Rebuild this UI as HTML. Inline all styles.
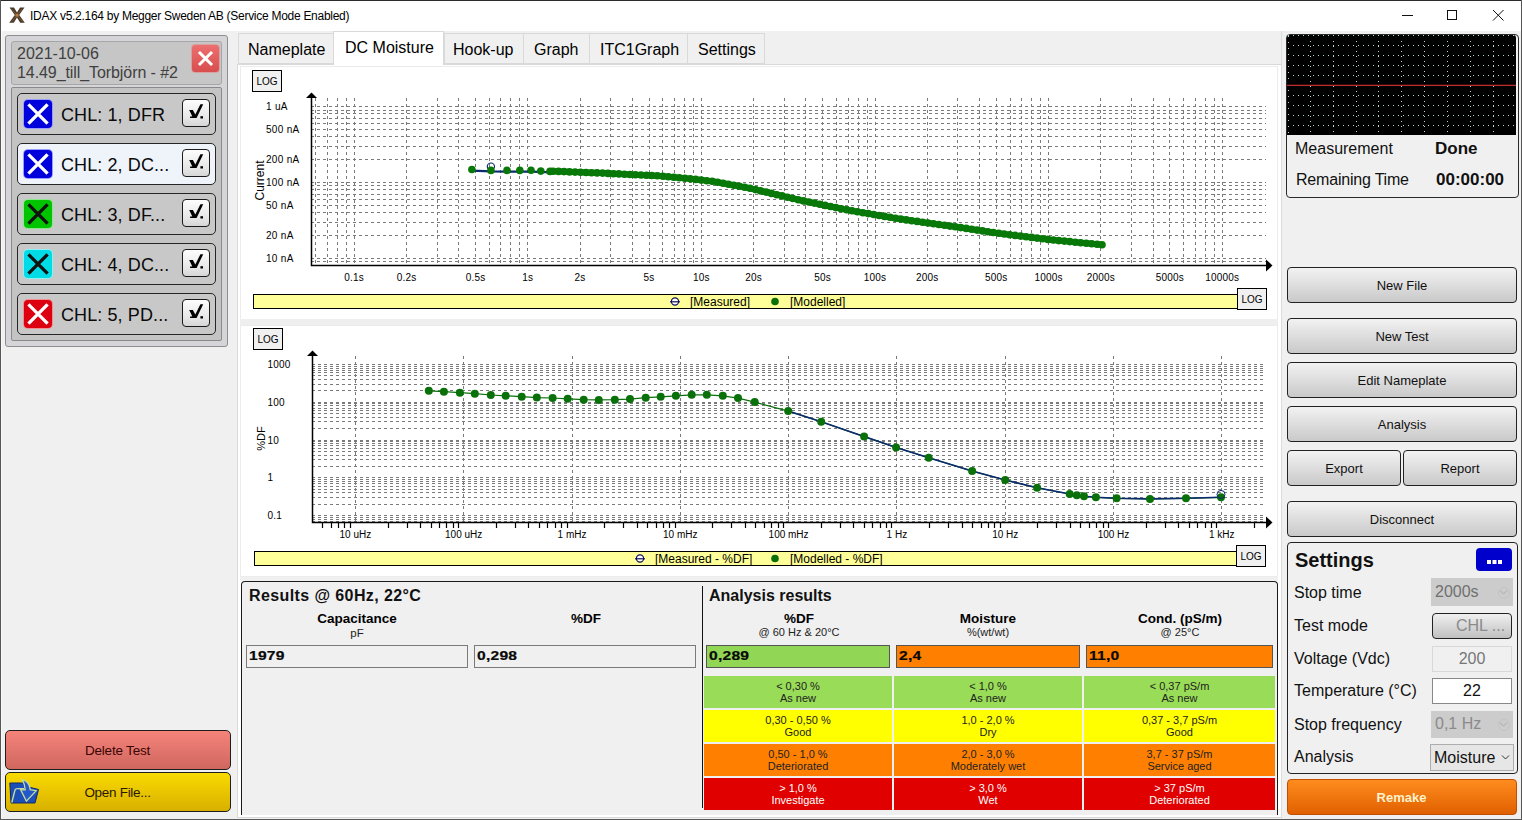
<!DOCTYPE html><html><head><meta charset="utf-8"><style>
*{margin:0;padding:0;box-sizing:border-box}
html,body{width:1522px;height:820px;overflow:hidden;background:#f0f0f0;font-family:"Liberation Sans",sans-serif;color:#000}
.a{position:absolute}
.t{position:absolute;white-space:nowrap;line-height:1}
</style></head><body><div class="a" style="left:0px;top:0px;width:1522px;height:31px;background:#ffffff"></div><div class="a" style="left:0px;top:0px;width:1522px;height:1px;background:#2b2b2b"></div><div class="a" style="left:0px;top:0px;width:1px;height:820px;background:#555555"></div><div class="a" style="left:1px;top:31px;width:1px;height:788px;background:#f9f9f9"></div><div class="a" style="left:1521px;top:0px;width:1px;height:820px;background:#555555"></div><div class="a" style="left:0px;top:819px;width:1522px;height:1px;background:#5a5a5a"></div><svg class="a" style="left:8px;top:6px" width="18" height="18" viewBox="0 0 18 18">
<path d="M1.5 1.5 L6 1.5 L9 6.5 L12 1.5 L16.5 1.5 L11.2 9 L16.8 16.8 L12.2 16.8 L9 11.6 L5.8 16.8 L1.2 16.8 L6.8 9 Z" fill="#4a3a28"/>
<path d="M3.5 3 L9 9.2 L14.5 15.5 M14 3 L9 9.2 L4 15.5" stroke="#8a6a48" stroke-width="0.9" fill="none" opacity="0.8"/><circle cx="9" cy="9.2" r="1.6" fill="#b87840"/>
</svg><div class="t" style="left:30px;top:10px;font-size:12px;color:#000;letter-spacing:-0.28px;">IDAX v5.2.164 by Megger Sweden AB (Service Mode Enabled)</div><div class="a" style="left:1402px;top:15px;width:11px;height:1px;background:#111"></div><div class="a" style="left:1447px;top:10px;width:10px;height:10px;border:1px solid #111"></div><svg class="a" style="left:1492px;top:9px" width="13" height="13" viewBox="0 0 13 13">
<path d="M1 1 L11.5 11.5 M11.5 1 L1 11.5" stroke="#111" stroke-width="1"/></svg><div class="a" style="left:5px;top:35px;width:223px;height:312px;background:#d5d5d9;border:1px solid #8e8e8e;border-radius:3px"></div><div class="a" style="left:11px;top:41px;width:211px;height:44px;background:#c6c6c6;border:1px solid #a6a6a6;border-radius:3px"></div><div class="t" style="left:17px;top:46px;font-size:16px;color:#404040;">2021-10-06</div><div class="t" style="left:17px;top:65px;font-size:16px;color:#404040;letter-spacing:-0.08px;">14.49_till_Torbjörn - #2</div><div class="a" style="left:191px;top:44px;width:29px;height:29px;background:linear-gradient(#ec6f6f,#d84e4e);border-radius:4px;border:1px solid #d9a0a0"></div><svg class="a" style="left:196px;top:49px" width="19" height="19" viewBox="0 0 19 19">
<path d="M4 4 L15 15 M15 4 L4 15" stroke="#fff" stroke-width="3" stroke-linecap="square"/></svg><div class="a" style="left:11px;top:87px;width:211px;height:254px;background:#c4c4c4;border:1px solid #8a8a8a;border-radius:2px"></div><div class="a" style="left:17px;top:93px;width:199px;height:42px;background:#c8c8c8;border:1.5px solid #262626;border-radius:5px"></div><div class="a" style="left:24px;top:100px;width:28px;height:28px;background:#0000dd;border-radius:4px;box-shadow:0 0 0 1px #9a9aff"></div><svg class="a" style="left:24px;top:100px" width="28" height="28" viewBox="0 0 28 28">
<path d="M5.6 5.6 L22.4 22.4 M22.4 5.6 L5.6 22.4" stroke="#fff" stroke-width="3.3" stroke-linecap="square"/></svg><div class="t" style="left:61px;top:105.5px;font-size:18px;color:#0a0a0a;letter-spacing:0.1px;">CHL: 1, DFR</div><div class="a" style="left:182px;top:99px;width:28px;height:28px;background:linear-gradient(#fdfdfd,#e6e6e6 70%,#d6d6d6);border:1.3px solid #1a1a1a;border-radius:4px"></div><svg class="a" style="left:182px;top:99px" width="28" height="28" viewBox="0 0 28 28">
<path d="M7.2 11 H10.9 L13.3 15.6 L18.4 5.2 H21.2 L14.6 18.9 H8.1 V17.5 H10.3 Z" fill="#000"/>
<rect x="18.4" y="17.2" width="2.6" height="2.3" fill="#000"/></svg><div class="a" style="left:17px;top:143px;width:199px;height:42px;background:#eef4fa;border:1.5px solid #262626;border-radius:5px"></div><div class="a" style="left:24px;top:150px;width:28px;height:28px;background:#0000dd;border-radius:4px;box-shadow:0 0 0 1px #9a9aff"></div><svg class="a" style="left:24px;top:150px" width="28" height="28" viewBox="0 0 28 28">
<path d="M5.6 5.6 L22.4 22.4 M22.4 5.6 L5.6 22.4" stroke="#fff" stroke-width="3.3" stroke-linecap="square"/></svg><div class="t" style="left:61px;top:155.5px;font-size:18px;color:#0a0a0a;letter-spacing:0.1px;">CHL: 2, DC...</div><div class="a" style="left:182px;top:149px;width:28px;height:28px;background:linear-gradient(#fdfdfd,#e6e6e6 70%,#d6d6d6);border:1.3px solid #1a1a1a;border-radius:4px"></div><svg class="a" style="left:182px;top:149px" width="28" height="28" viewBox="0 0 28 28">
<path d="M7.2 11 H10.9 L13.3 15.6 L18.4 5.2 H21.2 L14.6 18.9 H8.1 V17.5 H10.3 Z" fill="#000"/>
<rect x="18.4" y="17.2" width="2.6" height="2.3" fill="#000"/></svg><div class="a" style="left:17px;top:193px;width:199px;height:42px;background:#c8c8c8;border:1.5px solid #262626;border-radius:5px"></div><div class="a" style="left:24px;top:200px;width:28px;height:28px;background:#00c400;border-radius:4px;box-shadow:0 0 0 1px #8ce88c"></div><svg class="a" style="left:24px;top:200px" width="28" height="28" viewBox="0 0 28 28">
<path d="M5.6 5.6 L22.4 22.4 M22.4 5.6 L5.6 22.4" stroke="#111" stroke-width="3.3" stroke-linecap="square"/></svg><div class="t" style="left:61px;top:205.5px;font-size:18px;color:#0a0a0a;letter-spacing:0.1px;">CHL: 3, DF...</div><div class="a" style="left:182px;top:199px;width:28px;height:28px;background:linear-gradient(#fdfdfd,#e6e6e6 70%,#d6d6d6);border:1.3px solid #1a1a1a;border-radius:4px"></div><svg class="a" style="left:182px;top:199px" width="28" height="28" viewBox="0 0 28 28">
<path d="M7.2 11 H10.9 L13.3 15.6 L18.4 5.2 H21.2 L14.6 18.9 H8.1 V17.5 H10.3 Z" fill="#000"/>
<rect x="18.4" y="17.2" width="2.6" height="2.3" fill="#000"/></svg><div class="a" style="left:17px;top:243px;width:199px;height:42px;background:#c8c8c8;border:1.5px solid #262626;border-radius:5px"></div><div class="a" style="left:24px;top:250px;width:28px;height:28px;background:#00dce6;border-radius:4px;box-shadow:0 0 0 1px #8cf0f4"></div><svg class="a" style="left:24px;top:250px" width="28" height="28" viewBox="0 0 28 28">
<path d="M5.6 5.6 L22.4 22.4 M22.4 5.6 L5.6 22.4" stroke="#111" stroke-width="3.3" stroke-linecap="square"/></svg><div class="t" style="left:61px;top:255.5px;font-size:18px;color:#0a0a0a;letter-spacing:0.1px;">CHL: 4, DC...</div><div class="a" style="left:182px;top:249px;width:28px;height:28px;background:linear-gradient(#fdfdfd,#e6e6e6 70%,#d6d6d6);border:1.3px solid #1a1a1a;border-radius:4px"></div><svg class="a" style="left:182px;top:249px" width="28" height="28" viewBox="0 0 28 28">
<path d="M7.2 11 H10.9 L13.3 15.6 L18.4 5.2 H21.2 L14.6 18.9 H8.1 V17.5 H10.3 Z" fill="#000"/>
<rect x="18.4" y="17.2" width="2.6" height="2.3" fill="#000"/></svg><div class="a" style="left:17px;top:293px;width:199px;height:42px;background:#c8c8c8;border:1.5px solid #262626;border-radius:5px"></div><div class="a" style="left:24px;top:300px;width:28px;height:28px;background:#dd0010;border-radius:4px;box-shadow:0 0 0 1px #f09090"></div><svg class="a" style="left:24px;top:300px" width="28" height="28" viewBox="0 0 28 28">
<path d="M5.6 5.6 L22.4 22.4 M22.4 5.6 L5.6 22.4" stroke="#fff" stroke-width="3.3" stroke-linecap="square"/></svg><div class="t" style="left:61px;top:305.5px;font-size:18px;color:#0a0a0a;letter-spacing:0.1px;">CHL: 5, PD...</div><div class="a" style="left:182px;top:299px;width:28px;height:28px;background:linear-gradient(#fdfdfd,#e6e6e6 70%,#d6d6d6);border:1.3px solid #1a1a1a;border-radius:4px"></div><svg class="a" style="left:182px;top:299px" width="28" height="28" viewBox="0 0 28 28">
<path d="M7.2 11 H10.9 L13.3 15.6 L18.4 5.2 H21.2 L14.6 18.9 H8.1 V17.5 H10.3 Z" fill="#000"/>
<rect x="18.4" y="17.2" width="2.6" height="2.3" fill="#000"/></svg><div class="a" style="left:5px;top:730px;width:226px;height:40px;background:linear-gradient(#f5837a,#cf675f);border:1px solid #1e1e1e;border-radius:5px"></div><div class="t" style="left:-32.5px;top:743.5px;font-size:13.5px;color:#3a0505;letter-spacing:-0.2px;width:300px;text-align:center;">Delete Test</div><div class="a" style="left:5px;top:772px;width:226px;height:40px;background:linear-gradient(#f9da00,#d8b000);border:1px solid #1e1e1e;border-radius:5px"></div><div class="t" style="left:-32.5px;top:785.5px;font-size:13.5px;color:#2a1800;letter-spacing:-0.3px;width:300px;text-align:center;">Open File...</div><svg class="a" style="left:5px;top:772px" width="40" height="40" viewBox="0 0 40 40">
<path d="M4.8 11 L19 11 L19.5 14 L33.5 17.5 L30 31 L6 31 Z" fill="#1d4fb8" stroke="#0e2a6a" stroke-width="1"/>
<path d="M6.8 30.5 L10 18 Q10.6 16.6 12.2 16.6 L19 16.6" stroke="#c4dca0" stroke-width="1.4" fill="none"/>
<path d="M17.2 7.6 Q24.5 9.5 25.2 17.6 L31.2 18.6 L21.4 29.2 L15.6 17.6 L20.2 17.8 Q19.8 12 17.2 7.6 Z" fill="#2358c8" stroke="#c4dca0" stroke-width="1.3"/>
</svg><div class="a" style="left:237px;top:64px;width:1045px;height:754px;background:#ffffff;border:1px solid #d9d9d9"></div><div class="a" style="left:238px;top:33px;width:96px;height:31px;background:#f0f0f0;border:1px solid #d9d9d9"></div><div class="t" style="left:248px;top:42px;font-size:16px;color:#000;">Nameplate</div><div class="a" style="left:333px;top:31px;width:111px;height:34px;background:#ffffff;border:1px solid #d9d9d9;border-bottom:none"></div><div class="t" style="left:345px;top:40px;font-size:16px;color:#000;">DC Moisture</div><div class="a" style="left:444px;top:33px;width:80px;height:31px;background:#f0f0f0;border:1px solid #d9d9d9"></div><div class="t" style="left:453px;top:42px;font-size:16px;color:#000;">Hook-up</div><div class="a" style="left:523px;top:33px;width:67px;height:31px;background:#f0f0f0;border:1px solid #d9d9d9"></div><div class="t" style="left:534px;top:42px;font-size:16px;color:#000;">Graph</div><div class="a" style="left:589px;top:33px;width:99px;height:31px;background:#f0f0f0;border:1px solid #d9d9d9"></div><div class="t" style="left:600px;top:42px;font-size:16px;color:#000;">ITC1Graph</div><div class="a" style="left:687px;top:33px;width:78px;height:31px;background:#f0f0f0;border:1px solid #d9d9d9"></div><div class="t" style="left:698px;top:42px;font-size:16px;color:#000;">Settings</div><div class="a" style="left:240px;top:66px;width:1038px;height:254px;background:#ffffff;border:1px solid #ececec"></div><div class="a" style="left:240px;top:319px;width:1038px;height:7px;background:#efefef"></div><div class="a" style="left:240px;top:325px;width:1038px;height:252px;background:#ffffff;border:1px solid #ececec"></div><div class="a" style="left:240px;top:577px;width:1038px;height:4px;background:#f0f0f0"></div><svg class="a" style="left:0;top:0" width="1522" height="820" font-family="Liberation Sans, sans-serif"><path d="M311 261.5H1266M311 258.5H1266M311 235.5H1266M311 222.5H1266M311 212.5H1266M311 205.5H1266M311 199.5H1266M311 194.5H1266M311 189.5H1266M311 185.5H1266M311 182.5H1266M311 159.5H1266M311 146.5H1266M311 136.5H1266M311 129.5H1266M311 123.5H1266M311 118.5H1266M311 113.5H1266M311 110.5H1266M311 106.5H1266" stroke="#7a7a7a" stroke-width="1" stroke-dasharray="3 3" fill="none"/><path d="M315.5 98V265M327.5 98V265M337.5 98V265M346.5 98V265M354.5 98V265M406.5 98V265M437.5 98V265M458.5 98V265M475.5 98V265M489.5 98V265M500.5 98V265M510.5 98V265M519.5 98V265M527.5 98V265M580.5 98V265M610.5 98V265M632.5 98V265M649.5 98V265M662.5 98V265M674.5 98V265M684.5 98V265M693.5 98V265M701.5 98V265M753.5 98V265M784.5 98V265M805.5 98V265M822.5 98V265M836.5 98V265M848.5 98V265M858.5 98V265M867.5 98V265M875.5 98V265M927.5 98V265M957.5 98V265M979.5 98V265M996.5 98V265M1010.5 98V265M1021.5 98V265M1031.5 98V265M1040.5 98V265M1048.5 98V265M1100.5 98V265M1131.5 98V265M1153.5 98V265M1169.5 98V265M1183.5 98V265M1195.5 98V265M1205.5 98V265M1214.5 98V265M1222.5 98V265" stroke="#7a7a7a" stroke-width="1" stroke-dasharray="3 3" fill="none"/><path d="M311.5 97V265.5H1267" stroke="#000" stroke-width="1.5" fill="none"/><path d="M306 98L311.5 92.5L317 98Z" fill="#000"/><path d="M1266 259.5L1272.5 265.5L1266 271.5Z" fill="#000"/><text x="266" y="110.0" font-size="10" letter-spacing="0.3">1 uA</text><text x="266" y="133.0" font-size="10" letter-spacing="0.3">500 nA</text><text x="266" y="163.0" font-size="10" letter-spacing="0.3">200 nA</text><text x="266" y="186.0" font-size="10" letter-spacing="0.3">100 nA</text><text x="266" y="209.0" font-size="10" letter-spacing="0.3">50 nA</text><text x="266" y="239.0" font-size="10" letter-spacing="0.3">20 nA</text><text x="266" y="262.0" font-size="10" letter-spacing="0.3">10 nA</text><text x="354.2" y="281" text-anchor="middle" font-size="10" letter-spacing="0.2">0.1s</text><text x="406.5" y="281" text-anchor="middle" font-size="10" letter-spacing="0.2">0.2s</text><text x="475.5" y="281" text-anchor="middle" font-size="10" letter-spacing="0.2">0.5s</text><text x="527.8" y="281" text-anchor="middle" font-size="10" letter-spacing="0.2">1s</text><text x="580.1" y="281" text-anchor="middle" font-size="10" letter-spacing="0.2">2s</text><text x="649.1" y="281" text-anchor="middle" font-size="10" letter-spacing="0.2">5s</text><text x="701.4" y="281" text-anchor="middle" font-size="10" letter-spacing="0.2">10s</text><text x="753.7" y="281" text-anchor="middle" font-size="10" letter-spacing="0.2">20s</text><text x="822.7" y="281" text-anchor="middle" font-size="10" letter-spacing="0.2">50s</text><text x="875.0" y="281" text-anchor="middle" font-size="10" letter-spacing="0.2">100s</text><text x="927.3" y="281" text-anchor="middle" font-size="10" letter-spacing="0.2">200s</text><text x="996.3" y="281" text-anchor="middle" font-size="10" letter-spacing="0.2">500s</text><text x="1048.6" y="281" text-anchor="middle" font-size="10" letter-spacing="0.2">1000s</text><text x="1100.9" y="281" text-anchor="middle" font-size="10" letter-spacing="0.2">2000s</text><text x="1169.9" y="281" text-anchor="middle" font-size="10" letter-spacing="0.2">5000s</text><text x="1222.2" y="281" text-anchor="middle" font-size="10" letter-spacing="0.2">10000s</text><text transform="translate(263.6,180.5) rotate(-90)" text-anchor="middle" font-size="12">Current</text><polyline points="472,170.7 490.7,171.39999999999998 507,171.6 531,171.7 560,172.7 600,174.2 640,176.2 660,177.1 690,180.0 714,182.7 750,189.5 800,201.39999999999998 850,211.7 900,220.2 960,228.7 1000,234.7 1050,240.89999999999998 1102,246.0" stroke="#0b2a70" stroke-width="2.2" fill="none"/><polyline points="553,171.2 560,171.5 600,173 640,175 660,175.9 690,178.8 714,181.5 750,188.3 800,200.2 850,210.5 900,219 960,227.5 1000,233.5 1050,239.7 1102,244.8" stroke="#087808" stroke-width="6" fill="none" stroke-linejoin="round"/><circle cx="490.9" cy="166.6" r="3.6" fill="none" stroke="#0b2a70" stroke-width="1.2"/><circle cx="471.9" cy="169.5" r="3.8" fill="#087808"/><circle cx="490.9" cy="170.4" r="3.8" fill="#087808"/><circle cx="507.0" cy="170.4" r="3.8" fill="#087808"/><circle cx="519.8" cy="170.4" r="3.8" fill="#087808"/><circle cx="531.0" cy="170.3" r="3.8" fill="#087808"/><circle cx="540.8" cy="171.1" r="3.8" fill="#087808"/><circle cx="550.0" cy="171.4" r="3.8" fill="#087808"/><circle cx="553.0" cy="171.3" r="3.8" fill="#087808"/><circle cx="558.5" cy="171.4" r="3.8" fill="#087808"/><circle cx="564.0" cy="171.6" r="3.8" fill="#087808"/><circle cx="569.5" cy="171.9" r="3.8" fill="#087808"/><circle cx="575.0" cy="172.1" r="3.8" fill="#087808"/><circle cx="580.5" cy="172.3" r="3.8" fill="#087808"/><circle cx="586.0" cy="172.5" r="3.8" fill="#087808"/><circle cx="591.5" cy="172.7" r="3.8" fill="#087808"/><circle cx="597.0" cy="172.9" r="3.8" fill="#087808"/><circle cx="602.5" cy="173.1" r="3.8" fill="#087808"/><circle cx="608.0" cy="173.4" r="3.8" fill="#087808"/><circle cx="613.5" cy="173.7" r="3.8" fill="#087808"/><circle cx="618.9" cy="173.9" r="3.8" fill="#087808"/><circle cx="624.4" cy="174.2" r="3.8" fill="#087808"/><circle cx="629.9" cy="174.5" r="3.8" fill="#087808"/><circle cx="635.4" cy="174.8" r="3.8" fill="#087808"/><circle cx="640.9" cy="175.0" r="3.8" fill="#087808"/><circle cx="646.4" cy="175.3" r="3.8" fill="#087808"/><circle cx="651.9" cy="175.5" r="3.8" fill="#087808"/><circle cx="657.4" cy="175.8" r="3.8" fill="#087808"/><circle cx="662.9" cy="176.2" r="3.8" fill="#087808"/><circle cx="668.4" cy="176.7" r="3.8" fill="#087808"/><circle cx="673.8" cy="177.2" r="3.8" fill="#087808"/><circle cx="679.3" cy="177.8" r="3.8" fill="#087808"/><circle cx="684.8" cy="178.3" r="3.8" fill="#087808"/><circle cx="690.3" cy="178.8" r="3.8" fill="#087808"/><circle cx="695.7" cy="179.4" r="3.8" fill="#087808"/><circle cx="701.2" cy="180.1" r="3.8" fill="#087808"/><circle cx="706.7" cy="180.7" r="3.8" fill="#087808"/><circle cx="712.1" cy="181.3" r="3.8" fill="#087808"/><circle cx="717.6" cy="182.2" r="3.8" fill="#087808"/><circle cx="723.0" cy="183.2" r="3.8" fill="#087808"/><circle cx="728.4" cy="184.2" r="3.8" fill="#087808"/><circle cx="733.8" cy="185.2" r="3.8" fill="#087808"/><circle cx="739.2" cy="186.3" r="3.8" fill="#087808"/><circle cx="744.6" cy="187.3" r="3.8" fill="#087808"/><circle cx="750.0" cy="188.3" r="3.8" fill="#087808"/><circle cx="755.4" cy="189.6" r="3.8" fill="#087808"/><circle cx="760.7" cy="190.9" r="3.8" fill="#087808"/><circle cx="766.1" cy="192.1" r="3.8" fill="#087808"/><circle cx="771.4" cy="193.4" r="3.8" fill="#087808"/><circle cx="776.8" cy="194.7" r="3.8" fill="#087808"/><circle cx="782.1" cy="195.9" r="3.8" fill="#087808"/><circle cx="787.5" cy="197.2" r="3.8" fill="#087808"/><circle cx="792.8" cy="198.5" r="3.8" fill="#087808"/><circle cx="798.2" cy="199.8" r="3.8" fill="#087808"/><circle cx="803.5" cy="200.9" r="3.8" fill="#087808"/><circle cx="808.9" cy="202.0" r="3.8" fill="#087808"/><circle cx="814.3" cy="203.1" r="3.8" fill="#087808"/><circle cx="819.7" cy="204.3" r="3.8" fill="#087808"/><circle cx="825.1" cy="205.4" r="3.8" fill="#087808"/><circle cx="830.5" cy="206.5" r="3.8" fill="#087808"/><circle cx="835.8" cy="207.6" r="3.8" fill="#087808"/><circle cx="841.2" cy="208.7" r="3.8" fill="#087808"/><circle cx="846.6" cy="209.8" r="3.8" fill="#087808"/><circle cx="852.0" cy="210.8" r="3.8" fill="#087808"/><circle cx="857.4" cy="211.8" r="3.8" fill="#087808"/><circle cx="862.9" cy="212.7" r="3.8" fill="#087808"/><circle cx="868.3" cy="213.6" r="3.8" fill="#087808"/><circle cx="873.7" cy="214.5" r="3.8" fill="#087808"/><circle cx="879.1" cy="215.5" r="3.8" fill="#087808"/><circle cx="884.5" cy="216.4" r="3.8" fill="#087808"/><circle cx="890.0" cy="217.3" r="3.8" fill="#087808"/><circle cx="895.4" cy="218.2" r="3.8" fill="#087808"/><circle cx="900.8" cy="219.1" r="3.8" fill="#087808"/><circle cx="906.3" cy="219.9" r="3.8" fill="#087808"/><circle cx="911.7" cy="220.7" r="3.8" fill="#087808"/><circle cx="917.1" cy="221.4" r="3.8" fill="#087808"/><circle cx="922.6" cy="222.2" r="3.8" fill="#087808"/><circle cx="928.0" cy="223.0" r="3.8" fill="#087808"/><circle cx="933.5" cy="223.7" r="3.8" fill="#087808"/><circle cx="938.9" cy="224.5" r="3.8" fill="#087808"/><circle cx="944.4" cy="225.3" r="3.8" fill="#087808"/><circle cx="949.8" cy="226.1" r="3.8" fill="#087808"/><circle cx="955.3" cy="226.8" r="3.8" fill="#087808"/><circle cx="960.7" cy="227.6" r="3.8" fill="#087808"/><circle cx="966.2" cy="228.4" r="3.8" fill="#087808"/><circle cx="971.6" cy="229.2" r="3.8" fill="#087808"/><circle cx="977.0" cy="230.1" r="3.8" fill="#087808"/><circle cx="982.5" cy="230.9" r="3.8" fill="#087808"/><circle cx="987.9" cy="231.7" r="3.8" fill="#087808"/><circle cx="993.3" cy="232.5" r="3.8" fill="#087808"/><circle cx="998.8" cy="233.3" r="3.8" fill="#087808"/><circle cx="1004.2" cy="234.0" r="3.8" fill="#087808"/><circle cx="1009.7" cy="234.7" r="3.8" fill="#087808"/><circle cx="1015.1" cy="235.4" r="3.8" fill="#087808"/><circle cx="1020.6" cy="236.1" r="3.8" fill="#087808"/><circle cx="1026.1" cy="236.7" r="3.8" fill="#087808"/><circle cx="1031.5" cy="237.4" r="3.8" fill="#087808"/><circle cx="1037.0" cy="238.1" r="3.8" fill="#087808"/><circle cx="1042.4" cy="238.8" r="3.8" fill="#087808"/><circle cx="1047.9" cy="239.4" r="3.8" fill="#087808"/><circle cx="1053.3" cy="240.0" r="3.8" fill="#087808"/><circle cx="1058.8" cy="240.6" r="3.8" fill="#087808"/><circle cx="1064.3" cy="241.1" r="3.8" fill="#087808"/><circle cx="1069.8" cy="241.6" r="3.8" fill="#087808"/><circle cx="1075.2" cy="242.2" r="3.8" fill="#087808"/><circle cx="1080.7" cy="242.7" r="3.8" fill="#087808"/><circle cx="1086.2" cy="243.2" r="3.8" fill="#087808"/><circle cx="1091.7" cy="243.8" r="3.8" fill="#087808"/><circle cx="1097.1" cy="244.3" r="3.8" fill="#087808"/><circle cx="1102.0" cy="244.8" r="3.8" fill="#087808"/><path d="M312 521.5H1266M312 519.5H1266M312 517.5H1266M312 515.5H1266M312 504.5H1266M312 497.5H1266M312 492.5H1266M312 489.5H1266M312 486.5H1266M312 483.5H1266M312 481.5H1266M312 479.5H1266M312 477.5H1266M312 466.5H1266M312 459.5H1266M312 455.5H1266M312 451.5H1266M312 448.5H1266M312 445.5H1266M312 443.5H1266M312 441.5H1266M312 440.5H1266M312 428.5H1266M312 421.5H1266M312 417.5H1266M312 413.5H1266M312 410.5H1266M312 408.5H1266M312 405.5H1266M312 403.5H1266M312 402.5H1266M312 390.5H1266M312 384.5H1266M312 379.5H1266M312 375.5H1266M312 372.5H1266M312 370.5H1266M312 368.5H1266M312 366.5H1266M312 364.5H1266" stroke="#7a7a7a" stroke-width="1" stroke-dasharray="3 3" fill="none"/><path d="M355.5 356V522M463.5 356V522M572.5 356V522M680.5 356V522M788.5 356V522M896.5 356V522M1005.5 356V522M1113.5 356V522M1221.5 356V522" stroke="#7a7a7a" stroke-width="1" stroke-dasharray="3 3" fill="none"/><path d="M322.5 523V528M331.5 523V528M338.5 523V528M344.5 523V528M350.5 523V528M388.5 523V528M407.5 523V528M420.5 523V528M431.5 523V528M439.5 523V528M446.5 523V528M453.5 523V528M458.5 523V528M496.5 523V528M515.5 523V528M528.5 523V528M539.5 523V528M547.5 523V528M555.5 523V528M561.5 523V528M567.5 523V528M604.5 523V528M623.5 523V528M637.5 523V528M647.5 523V528M656.5 523V528M663.5 523V528M669.5 523V528M675.5 523V528M712.5 523V528M731.5 523V528M745.5 523V528M755.5 523V528M764.5 523V528M771.5 523V528M778.5 523V528M783.5 523V528M821.5 523V528M840.5 523V528M853.5 523V528M864.5 523V528M872.5 523V528M880.5 523V528M886.5 523V528M891.5 523V528M929.5 523V528M948.5 523V528M962.5 523V528M972.5 523V528M981.5 523V528M988.5 523V528M994.5 523V528M1000.5 523V528M1037.5 523V528M1056.5 523V528M1070.5 523V528M1080.5 523V528M1089.5 523V528M1096.5 523V528M1103.5 523V528M1108.5 523V528M1146.5 523V528M1165.5 523V528M1178.5 523V528M1189.5 523V528M1197.5 523V528M1205.5 523V528M1211.5 523V528M1216.5 523V528M1254.5 523V528" stroke="#000" stroke-width="1.2" fill="none"/><path d="M312.5 354V522.5H1267" stroke="#000" stroke-width="1.5" fill="none"/><path d="M307 356L312.5 350.5L318 356Z" fill="#000"/><path d="M1266 516.5L1272.5 522.5L1266 528.5Z" fill="#000"/><text x="267.5" y="368.0" text-anchor="start" font-size="10" letter-spacing="0.2">1000</text><text x="267.5" y="406.0" text-anchor="start" font-size="10" letter-spacing="0.2">100</text><text x="267.5" y="444.0" text-anchor="start" font-size="10" letter-spacing="0.2">10</text><text x="267.5" y="481.0" text-anchor="start" font-size="10" letter-spacing="0.2">1</text><text x="267.5" y="519.0" text-anchor="start" font-size="10" letter-spacing="0.2">0.1</text><text x="355.4" y="538" text-anchor="middle" font-size="10">10 uHz</text><text x="463.7" y="538" text-anchor="middle" font-size="10">100 uHz</text><text x="572.0" y="538" text-anchor="middle" font-size="10">1 mHz</text><text x="680.3" y="538" text-anchor="middle" font-size="10">10 mHz</text><text x="788.6" y="538" text-anchor="middle" font-size="10">100 mHz</text><text x="896.9" y="538" text-anchor="middle" font-size="10">1 Hz</text><text x="1005.2" y="538" text-anchor="middle" font-size="10">10 Hz</text><text x="1113.5" y="538" text-anchor="middle" font-size="10">100 Hz</text><text x="1221.8" y="538" text-anchor="middle" font-size="10">1 kHz</text><text transform="translate(265,438.5) rotate(-90)" text-anchor="middle" font-size="11">%DF</text><polyline points="428.8,390.8 443.9,391.7 459.9,392.7 474.8,393.7 490.8,395 505.7,395.8 521.7,396.7 536.8,397.6 552.6,398 567.7,398.8 583.7,399.7 598.8,399.9 614.8,399.7 630,399.1 645.7,397.7 660.7,396.8 675.9,395.8 691.7,394.8 706.8,394.8 722.8,395.8 738,398.1 754.7,402.1 788.2,411.1 821.2,421.8 864.1,436.6 896.1,447.4 928.7,457.7 972.1,471.1 1005.2,480 1037.1,487.8 1069.7,494 1076.8,495.3 1084,496.3 1095.9,497.3 1116.6,498.3 1150,498.9 1186,498.3 1221,497.3" stroke="#0a700a" stroke-width="1.2" fill="none"/><polyline points="788.2,411.1 821.2,421.8 864.1,436.6 896.1,447.4 928.7,457.7 972.1,471.1 1005.2,480 1037.1,487.8 1069.7,494 1076.8,495.3 1084,496.3 1095.9,497.3 1116.6,498.3 1150,498.9 1186,498.3 1221,497.3" stroke="#0b2a70" stroke-width="1.6" fill="none"/><circle cx="428.8" cy="390.8" r="4" fill="#0a700a"/><circle cx="443.9" cy="391.7" r="4" fill="#0a700a"/><circle cx="459.9" cy="392.7" r="4" fill="#0a700a"/><circle cx="474.8" cy="393.7" r="4" fill="#0a700a"/><circle cx="490.8" cy="395" r="4" fill="#0a700a"/><circle cx="505.7" cy="395.8" r="4" fill="#0a700a"/><circle cx="521.7" cy="396.7" r="4" fill="#0a700a"/><circle cx="536.8" cy="397.6" r="4" fill="#0a700a"/><circle cx="552.6" cy="398" r="4" fill="#0a700a"/><circle cx="567.7" cy="398.8" r="4" fill="#0a700a"/><circle cx="583.7" cy="399.7" r="4" fill="#0a700a"/><circle cx="598.8" cy="399.9" r="4" fill="#0a700a"/><circle cx="614.8" cy="399.7" r="4" fill="#0a700a"/><circle cx="630" cy="399.1" r="4" fill="#0a700a"/><circle cx="645.7" cy="397.7" r="4" fill="#0a700a"/><circle cx="660.7" cy="396.8" r="4" fill="#0a700a"/><circle cx="675.9" cy="395.8" r="4" fill="#0a700a"/><circle cx="691.7" cy="394.8" r="4" fill="#0a700a"/><circle cx="706.8" cy="394.8" r="4" fill="#0a700a"/><circle cx="722.8" cy="395.8" r="4" fill="#0a700a"/><circle cx="738" cy="398.1" r="4" fill="#0a700a"/><circle cx="754.7" cy="402.1" r="4" fill="#0a700a"/><circle cx="788.2" cy="411.1" r="4" fill="#0a700a"/><circle cx="821.2" cy="421.8" r="4" fill="#0a700a"/><circle cx="864.1" cy="436.6" r="4" fill="#0a700a"/><circle cx="896.1" cy="447.4" r="4" fill="#0a700a"/><circle cx="928.7" cy="457.7" r="4" fill="#0a700a"/><circle cx="972.1" cy="471.1" r="4" fill="#0a700a"/><circle cx="1005.2" cy="480" r="4" fill="#0a700a"/><circle cx="1037.1" cy="487.8" r="4" fill="#0a700a"/><circle cx="1069.7" cy="494" r="4" fill="#0a700a"/><circle cx="1076.8" cy="495.3" r="4" fill="#0a700a"/><circle cx="1084" cy="496.3" r="4" fill="#0a700a"/><circle cx="1095.9" cy="497.3" r="4" fill="#0a700a"/><circle cx="1116.6" cy="498.3" r="4" fill="#0a700a"/><circle cx="1150" cy="498.9" r="4" fill="#0a700a"/><circle cx="1186" cy="498.3" r="4" fill="#0a700a"/><circle cx="1221" cy="497.3" r="4" fill="#0a700a"/><circle cx="1221" cy="494.4" r="4" fill="none" stroke="#0b2a70" stroke-width="1"/><rect x="253.5" y="294.5" width="984" height="14" fill="#ffff99" stroke="#000" stroke-width="1"/><circle cx="675" cy="301.5" r="3.6" fill="#fff" stroke="#101060" stroke-width="1.2"/><path d="M670 301.8H680" stroke="#101060" stroke-width="1.2"/><text x="690" y="305.5" font-size="12">[Measured]</text><circle cx="775" cy="301.5" r="3.8" fill="#0a700a"/><text x="790" y="305.5" font-size="12">[Modelled]</text><rect x="254.5" y="551.5" width="982" height="14" fill="#ffff99" stroke="#000" stroke-width="1"/><circle cx="640" cy="558.5" r="3.6" fill="#fff" stroke="#101060" stroke-width="1.2"/><path d="M635 558.8H645" stroke="#101060" stroke-width="1.2"/><text x="655" y="562.5" font-size="12">[Measured - %DF]</text><circle cx="775" cy="558.5" r="3.8" fill="#0a700a"/><text x="790" y="562.5" font-size="12">[Modelled - %DF]</text><rect x="252.5" y="70.5" width="29" height="21" fill="#f0f0f0" stroke="#000" stroke-width="1"/><text x="267.1" y="84.7" text-anchor="middle" font-size="10">LOG</text><rect x="1237.5" y="288.5" width="29" height="21" fill="#f0f0f0" stroke="#000" stroke-width="1"/><text x="1252.1" y="302.7" text-anchor="middle" font-size="10">LOG</text><rect x="253.5" y="328.5" width="29" height="21" fill="#f0f0f0" stroke="#000" stroke-width="1"/><text x="268.1" y="342.7" text-anchor="middle" font-size="10">LOG</text><rect x="1236.5" y="545.5" width="29" height="21" fill="#f0f0f0" stroke="#000" stroke-width="1"/><text x="1251.1" y="559.7" text-anchor="middle" font-size="10">LOG</text></svg><div class="a" style="left:241px;top:581px;width:1037px;height:234px;border:1px solid #1a1a1a;border-bottom:none;border-radius:4px 4px 0 0;background:#f0f0f0"></div><div class="a" style="left:702px;top:586px;width:1px;height:222px;background:#111"></div><div class="t" style="left:249px;top:588px;font-size:16px;font-weight:bold;color:#111;letter-spacing:0.4px;">Results @ 60Hz, 22°C</div><div class="t" style="left:207.0px;top:611.5px;font-size:13.5px;font-weight:bold;width:300px;text-align:center;">Capacitance</div><div class="t" style="left:207.0px;top:628.2px;font-size:11.5px;color:#222;width:300px;text-align:center;">pF</div><div class="t" style="left:436.0px;top:611.5px;font-size:13.5px;font-weight:bold;width:300px;text-align:center;">%DF</div><div class="a" style="left:246px;top:645px;width:222px;height:23px;background:#f0f0f0;border:1px solid #7a7a7a"></div><div class="t" style="left:248.5px;top:649px;font-size:13px;font-weight:bold;letter-spacing:0.2px;color:#0a0a0a;transform:scaleX(1.2);transform-origin:0 0;-webkit-text-stroke:0.2px #000;">1979</div><div class="a" style="left:474px;top:645px;width:222px;height:23px;background:#f0f0f0;border:1px solid #7a7a7a"></div><div class="t" style="left:476.5px;top:649px;font-size:13px;font-weight:bold;letter-spacing:0.2px;color:#0a0a0a;transform:scaleX(1.2);transform-origin:0 0;-webkit-text-stroke:0.2px #000;">0,298</div><div class="t" style="left:709px;top:588px;font-size:16px;font-weight:bold;color:#111;">Analysis results</div><div class="t" style="left:649.0px;top:611.5px;font-size:13.5px;font-weight:bold;width:300px;text-align:center;">%DF</div><div class="t" style="left:649.0px;top:627px;font-size:11px;color:#222;width:300px;text-align:center;">@ 60 Hz &amp; 20°C</div><div class="t" style="left:838.0px;top:611.5px;font-size:13.5px;font-weight:bold;width:300px;text-align:center;">Moisture</div><div class="t" style="left:838.0px;top:627px;font-size:11px;color:#222;width:300px;text-align:center;">%(wt/wt)</div><div class="t" style="left:1030.0px;top:611.5px;font-size:13.5px;font-weight:bold;width:300px;text-align:center;">Cond. (pS/m)</div><div class="t" style="left:1030.0px;top:627px;font-size:11px;color:#222;width:300px;text-align:center;">@ 25°C</div><div class="a" style="left:706px;top:645px;width:184px;height:23px;background:#92d656;border:1px solid #555"></div><div class="t" style="left:708.5px;top:649px;font-size:13px;font-weight:bold;letter-spacing:0.2px;color:#0a0a0a;transform:scaleX(1.2);transform-origin:0 0;-webkit-text-stroke:0.2px #000;">0,289</div><div class="a" style="left:896px;top:645px;width:184px;height:23px;background:#ff8000;border:1px solid #555"></div><div class="t" style="left:898.5px;top:649px;font-size:13px;font-weight:bold;letter-spacing:0.2px;color:#0a0a0a;transform:scaleX(1.2);transform-origin:0 0;-webkit-text-stroke:0.2px #000;">2,4</div><div class="a" style="left:1086px;top:645px;width:187px;height:23px;background:#ff8000;border:1px solid #555"></div><div class="t" style="left:1088.5px;top:649px;font-size:13px;font-weight:bold;letter-spacing:0.2px;color:#0a0a0a;transform:scaleX(1.2);transform-origin:0 0;-webkit-text-stroke:0.2px #000;">11,0</div><div class="a" style="left:704px;top:676px;width:188px;height:32px;background:#98dc58"></div><div class="t" style="left:704.0px;top:680.7px;font-size:11px;color:#222;width:188px;text-align:center;">&lt; 0,30 %</div><div class="t" style="left:704.0px;top:692.5px;font-size:11px;color:#222;width:188px;text-align:center;">As new</div><div class="a" style="left:894px;top:676px;width:188px;height:32px;background:#98dc58"></div><div class="t" style="left:894.0px;top:680.7px;font-size:11px;color:#222;width:188px;text-align:center;">&lt; 1,0 %</div><div class="t" style="left:894.0px;top:692.5px;font-size:11px;color:#222;width:188px;text-align:center;">As new</div><div class="a" style="left:1084px;top:676px;width:191px;height:32px;background:#98dc58"></div><div class="t" style="left:1084.0px;top:680.7px;font-size:11px;color:#222;width:191px;text-align:center;">&lt; 0,37 pS/m</div><div class="t" style="left:1084.0px;top:692.5px;font-size:11px;color:#222;width:191px;text-align:center;">As new</div><div class="a" style="left:704px;top:710px;width:188px;height:32px;background:#ffff00"></div><div class="t" style="left:704.0px;top:714.7px;font-size:11px;color:#222;width:188px;text-align:center;">0,30 - 0,50 %</div><div class="t" style="left:704.0px;top:726.5px;font-size:11px;color:#222;width:188px;text-align:center;">Good</div><div class="a" style="left:894px;top:710px;width:188px;height:32px;background:#ffff00"></div><div class="t" style="left:894.0px;top:714.7px;font-size:11px;color:#222;width:188px;text-align:center;">1,0 - 2,0 %</div><div class="t" style="left:894.0px;top:726.5px;font-size:11px;color:#222;width:188px;text-align:center;">Dry</div><div class="a" style="left:1084px;top:710px;width:191px;height:32px;background:#ffff00"></div><div class="t" style="left:1084.0px;top:714.7px;font-size:11px;color:#222;width:191px;text-align:center;">0,37 - 3,7 pS/m</div><div class="t" style="left:1084.0px;top:726.5px;font-size:11px;color:#222;width:191px;text-align:center;">Good</div><div class="a" style="left:704px;top:744px;width:188px;height:32px;background:#ff8000"></div><div class="t" style="left:704.0px;top:748.7px;font-size:11px;color:#222;width:188px;text-align:center;">0,50 - 1,0 %</div><div class="t" style="left:704.0px;top:760.5px;font-size:11px;color:#222;width:188px;text-align:center;">Deteriorated</div><div class="a" style="left:894px;top:744px;width:188px;height:32px;background:#ff8000"></div><div class="t" style="left:894.0px;top:748.7px;font-size:11px;color:#222;width:188px;text-align:center;">2,0 - 3,0 %</div><div class="t" style="left:894.0px;top:760.5px;font-size:11px;color:#222;width:188px;text-align:center;">Moderately wet</div><div class="a" style="left:1084px;top:744px;width:191px;height:32px;background:#ff8000"></div><div class="t" style="left:1084.0px;top:748.7px;font-size:11px;color:#222;width:191px;text-align:center;">3,7 - 37 pS/m</div><div class="t" style="left:1084.0px;top:760.5px;font-size:11px;color:#222;width:191px;text-align:center;">Service aged</div><div class="a" style="left:704px;top:778px;width:188px;height:32px;background:#e00000"></div><div class="t" style="left:704.0px;top:782.7px;font-size:11px;color:#fff;width:188px;text-align:center;">&gt; 1,0 %</div><div class="t" style="left:704.0px;top:794.5px;font-size:11px;color:#fff;width:188px;text-align:center;">Investigate</div><div class="a" style="left:894px;top:778px;width:188px;height:32px;background:#e00000"></div><div class="t" style="left:894.0px;top:782.7px;font-size:11px;color:#fff;width:188px;text-align:center;">&gt; 3,0 %</div><div class="t" style="left:894.0px;top:794.5px;font-size:11px;color:#fff;width:188px;text-align:center;">Wet</div><div class="a" style="left:1084px;top:778px;width:191px;height:32px;background:#e00000"></div><div class="t" style="left:1084.0px;top:782.7px;font-size:11px;color:#fff;width:191px;text-align:center;">&gt; 37 pS/m</div><div class="t" style="left:1084.0px;top:794.5px;font-size:11px;color:#fff;width:191px;text-align:center;">Deteriorated</div><div class="a" style="left:1281px;top:31px;width:1px;height:786px;background:#dcdcdc"></div><div class="a" style="left:1286px;top:34px;width:233px;height:164px;border:1px solid #2a2a2a;border-radius:4px;background:#f0f0f0"></div><div class="a" style="left:1287px;top:35px;width:229px;height:100px;background:#000;border-radius:3px 3px 0 0"></div><svg class="a" style="left:0;top:0" width="1522" height="820"><path d="M1293 45h1v1h-1zM1298 45h1v1h-1zM1303 45h1v1h-1zM1308 45h1v1h-1zM1313 45h1v1h-1zM1318 45h1v1h-1zM1323 45h1v1h-1zM1328 45h1v1h-1zM1333 45h1v1h-1zM1338 45h1v1h-1zM1343 45h1v1h-1zM1348 45h1v1h-1zM1353 45h1v1h-1zM1358 45h1v1h-1zM1363 45h1v1h-1zM1368 45h1v1h-1zM1373 45h1v1h-1zM1378 45h1v1h-1zM1383 45h1v1h-1zM1388 45h1v1h-1zM1393 45h1v1h-1zM1398 45h1v1h-1zM1403 45h1v1h-1zM1408 45h1v1h-1zM1413 45h1v1h-1zM1418 45h1v1h-1zM1423 45h1v1h-1zM1428 45h1v1h-1zM1433 45h1v1h-1zM1438 45h1v1h-1zM1443 45h1v1h-1zM1448 45h1v1h-1zM1453 45h1v1h-1zM1458 45h1v1h-1zM1463 45h1v1h-1zM1468 45h1v1h-1zM1473 45h1v1h-1zM1478 45h1v1h-1zM1483 45h1v1h-1zM1488 45h1v1h-1zM1493 45h1v1h-1zM1498 45h1v1h-1zM1503 45h1v1h-1zM1508 45h1v1h-1zM1513 45h1v1h-1zM1293 55h1v1h-1zM1298 55h1v1h-1zM1303 55h1v1h-1zM1308 55h1v1h-1zM1313 55h1v1h-1zM1318 55h1v1h-1zM1323 55h1v1h-1zM1328 55h1v1h-1zM1333 55h1v1h-1zM1338 55h1v1h-1zM1343 55h1v1h-1zM1348 55h1v1h-1zM1353 55h1v1h-1zM1358 55h1v1h-1zM1363 55h1v1h-1zM1368 55h1v1h-1zM1373 55h1v1h-1zM1378 55h1v1h-1zM1383 55h1v1h-1zM1388 55h1v1h-1zM1393 55h1v1h-1zM1398 55h1v1h-1zM1403 55h1v1h-1zM1408 55h1v1h-1zM1413 55h1v1h-1zM1418 55h1v1h-1zM1423 55h1v1h-1zM1428 55h1v1h-1zM1433 55h1v1h-1zM1438 55h1v1h-1zM1443 55h1v1h-1zM1448 55h1v1h-1zM1453 55h1v1h-1zM1458 55h1v1h-1zM1463 55h1v1h-1zM1468 55h1v1h-1zM1473 55h1v1h-1zM1478 55h1v1h-1zM1483 55h1v1h-1zM1488 55h1v1h-1zM1493 55h1v1h-1zM1498 55h1v1h-1zM1503 55h1v1h-1zM1508 55h1v1h-1zM1513 55h1v1h-1zM1293 65h1v1h-1zM1298 65h1v1h-1zM1303 65h1v1h-1zM1308 65h1v1h-1zM1313 65h1v1h-1zM1318 65h1v1h-1zM1323 65h1v1h-1zM1328 65h1v1h-1zM1333 65h1v1h-1zM1338 65h1v1h-1zM1343 65h1v1h-1zM1348 65h1v1h-1zM1353 65h1v1h-1zM1358 65h1v1h-1zM1363 65h1v1h-1zM1368 65h1v1h-1zM1373 65h1v1h-1zM1378 65h1v1h-1zM1383 65h1v1h-1zM1388 65h1v1h-1zM1393 65h1v1h-1zM1398 65h1v1h-1zM1403 65h1v1h-1zM1408 65h1v1h-1zM1413 65h1v1h-1zM1418 65h1v1h-1zM1423 65h1v1h-1zM1428 65h1v1h-1zM1433 65h1v1h-1zM1438 65h1v1h-1zM1443 65h1v1h-1zM1448 65h1v1h-1zM1453 65h1v1h-1zM1458 65h1v1h-1zM1463 65h1v1h-1zM1468 65h1v1h-1zM1473 65h1v1h-1zM1478 65h1v1h-1zM1483 65h1v1h-1zM1488 65h1v1h-1zM1493 65h1v1h-1zM1498 65h1v1h-1zM1503 65h1v1h-1zM1508 65h1v1h-1zM1513 65h1v1h-1zM1293 75h1v1h-1zM1298 75h1v1h-1zM1303 75h1v1h-1zM1308 75h1v1h-1zM1313 75h1v1h-1zM1318 75h1v1h-1zM1323 75h1v1h-1zM1328 75h1v1h-1zM1333 75h1v1h-1zM1338 75h1v1h-1zM1343 75h1v1h-1zM1348 75h1v1h-1zM1353 75h1v1h-1zM1358 75h1v1h-1zM1363 75h1v1h-1zM1368 75h1v1h-1zM1373 75h1v1h-1zM1378 75h1v1h-1zM1383 75h1v1h-1zM1388 75h1v1h-1zM1393 75h1v1h-1zM1398 75h1v1h-1zM1403 75h1v1h-1zM1408 75h1v1h-1zM1413 75h1v1h-1zM1418 75h1v1h-1zM1423 75h1v1h-1zM1428 75h1v1h-1zM1433 75h1v1h-1zM1438 75h1v1h-1zM1443 75h1v1h-1zM1448 75h1v1h-1zM1453 75h1v1h-1zM1458 75h1v1h-1zM1463 75h1v1h-1zM1468 75h1v1h-1zM1473 75h1v1h-1zM1478 75h1v1h-1zM1483 75h1v1h-1zM1488 75h1v1h-1zM1493 75h1v1h-1zM1498 75h1v1h-1zM1503 75h1v1h-1zM1508 75h1v1h-1zM1513 75h1v1h-1zM1293 95h1v1h-1zM1298 95h1v1h-1zM1303 95h1v1h-1zM1308 95h1v1h-1zM1313 95h1v1h-1zM1318 95h1v1h-1zM1323 95h1v1h-1zM1328 95h1v1h-1zM1333 95h1v1h-1zM1338 95h1v1h-1zM1343 95h1v1h-1zM1348 95h1v1h-1zM1353 95h1v1h-1zM1358 95h1v1h-1zM1363 95h1v1h-1zM1368 95h1v1h-1zM1373 95h1v1h-1zM1378 95h1v1h-1zM1383 95h1v1h-1zM1388 95h1v1h-1zM1393 95h1v1h-1zM1398 95h1v1h-1zM1403 95h1v1h-1zM1408 95h1v1h-1zM1413 95h1v1h-1zM1418 95h1v1h-1zM1423 95h1v1h-1zM1428 95h1v1h-1zM1433 95h1v1h-1zM1438 95h1v1h-1zM1443 95h1v1h-1zM1448 95h1v1h-1zM1453 95h1v1h-1zM1458 95h1v1h-1zM1463 95h1v1h-1zM1468 95h1v1h-1zM1473 95h1v1h-1zM1478 95h1v1h-1zM1483 95h1v1h-1zM1488 95h1v1h-1zM1493 95h1v1h-1zM1498 95h1v1h-1zM1503 95h1v1h-1zM1508 95h1v1h-1zM1513 95h1v1h-1zM1293 105h1v1h-1zM1298 105h1v1h-1zM1303 105h1v1h-1zM1308 105h1v1h-1zM1313 105h1v1h-1zM1318 105h1v1h-1zM1323 105h1v1h-1zM1328 105h1v1h-1zM1333 105h1v1h-1zM1338 105h1v1h-1zM1343 105h1v1h-1zM1348 105h1v1h-1zM1353 105h1v1h-1zM1358 105h1v1h-1zM1363 105h1v1h-1zM1368 105h1v1h-1zM1373 105h1v1h-1zM1378 105h1v1h-1zM1383 105h1v1h-1zM1388 105h1v1h-1zM1393 105h1v1h-1zM1398 105h1v1h-1zM1403 105h1v1h-1zM1408 105h1v1h-1zM1413 105h1v1h-1zM1418 105h1v1h-1zM1423 105h1v1h-1zM1428 105h1v1h-1zM1433 105h1v1h-1zM1438 105h1v1h-1zM1443 105h1v1h-1zM1448 105h1v1h-1zM1453 105h1v1h-1zM1458 105h1v1h-1zM1463 105h1v1h-1zM1468 105h1v1h-1zM1473 105h1v1h-1zM1478 105h1v1h-1zM1483 105h1v1h-1zM1488 105h1v1h-1zM1493 105h1v1h-1zM1498 105h1v1h-1zM1503 105h1v1h-1zM1508 105h1v1h-1zM1513 105h1v1h-1zM1293 115h1v1h-1zM1298 115h1v1h-1zM1303 115h1v1h-1zM1308 115h1v1h-1zM1313 115h1v1h-1zM1318 115h1v1h-1zM1323 115h1v1h-1zM1328 115h1v1h-1zM1333 115h1v1h-1zM1338 115h1v1h-1zM1343 115h1v1h-1zM1348 115h1v1h-1zM1353 115h1v1h-1zM1358 115h1v1h-1zM1363 115h1v1h-1zM1368 115h1v1h-1zM1373 115h1v1h-1zM1378 115h1v1h-1zM1383 115h1v1h-1zM1388 115h1v1h-1zM1393 115h1v1h-1zM1398 115h1v1h-1zM1403 115h1v1h-1zM1408 115h1v1h-1zM1413 115h1v1h-1zM1418 115h1v1h-1zM1423 115h1v1h-1zM1428 115h1v1h-1zM1433 115h1v1h-1zM1438 115h1v1h-1zM1443 115h1v1h-1zM1448 115h1v1h-1zM1453 115h1v1h-1zM1458 115h1v1h-1zM1463 115h1v1h-1zM1468 115h1v1h-1zM1473 115h1v1h-1zM1478 115h1v1h-1zM1483 115h1v1h-1zM1488 115h1v1h-1zM1493 115h1v1h-1zM1498 115h1v1h-1zM1503 115h1v1h-1zM1508 115h1v1h-1zM1513 115h1v1h-1zM1293 125h1v1h-1zM1298 125h1v1h-1zM1303 125h1v1h-1zM1308 125h1v1h-1zM1313 125h1v1h-1zM1318 125h1v1h-1zM1323 125h1v1h-1zM1328 125h1v1h-1zM1333 125h1v1h-1zM1338 125h1v1h-1zM1343 125h1v1h-1zM1348 125h1v1h-1zM1353 125h1v1h-1zM1358 125h1v1h-1zM1363 125h1v1h-1zM1368 125h1v1h-1zM1373 125h1v1h-1zM1378 125h1v1h-1zM1383 125h1v1h-1zM1388 125h1v1h-1zM1393 125h1v1h-1zM1398 125h1v1h-1zM1403 125h1v1h-1zM1408 125h1v1h-1zM1413 125h1v1h-1zM1418 125h1v1h-1zM1423 125h1v1h-1zM1428 125h1v1h-1zM1433 125h1v1h-1zM1438 125h1v1h-1zM1443 125h1v1h-1zM1448 125h1v1h-1zM1453 125h1v1h-1zM1458 125h1v1h-1zM1463 125h1v1h-1zM1468 125h1v1h-1zM1473 125h1v1h-1zM1478 125h1v1h-1zM1483 125h1v1h-1zM1488 125h1v1h-1zM1493 125h1v1h-1zM1498 125h1v1h-1zM1503 125h1v1h-1zM1508 125h1v1h-1zM1513 125h1v1h-1zM1310 41h1v1h-1zM1310 46h1v1h-1zM1310 51h1v1h-1zM1310 56h1v1h-1zM1310 61h1v1h-1zM1310 66h1v1h-1zM1310 71h1v1h-1zM1310 76h1v1h-1zM1310 81h1v1h-1zM1310 86h1v1h-1zM1310 91h1v1h-1zM1310 96h1v1h-1zM1310 101h1v1h-1zM1310 106h1v1h-1zM1310 111h1v1h-1zM1310 116h1v1h-1zM1310 121h1v1h-1zM1310 126h1v1h-1zM1310 131h1v1h-1zM1333 41h1v1h-1zM1333 46h1v1h-1zM1333 51h1v1h-1zM1333 56h1v1h-1zM1333 61h1v1h-1zM1333 66h1v1h-1zM1333 71h1v1h-1zM1333 76h1v1h-1zM1333 81h1v1h-1zM1333 86h1v1h-1zM1333 91h1v1h-1zM1333 96h1v1h-1zM1333 101h1v1h-1zM1333 106h1v1h-1zM1333 111h1v1h-1zM1333 116h1v1h-1zM1333 121h1v1h-1zM1333 126h1v1h-1zM1333 131h1v1h-1zM1356 41h1v1h-1zM1356 46h1v1h-1zM1356 51h1v1h-1zM1356 56h1v1h-1zM1356 61h1v1h-1zM1356 66h1v1h-1zM1356 71h1v1h-1zM1356 76h1v1h-1zM1356 81h1v1h-1zM1356 86h1v1h-1zM1356 91h1v1h-1zM1356 96h1v1h-1zM1356 101h1v1h-1zM1356 106h1v1h-1zM1356 111h1v1h-1zM1356 116h1v1h-1zM1356 121h1v1h-1zM1356 126h1v1h-1zM1356 131h1v1h-1zM1378 41h1v1h-1zM1378 46h1v1h-1zM1378 51h1v1h-1zM1378 56h1v1h-1zM1378 61h1v1h-1zM1378 66h1v1h-1zM1378 71h1v1h-1zM1378 76h1v1h-1zM1378 81h1v1h-1zM1378 86h1v1h-1zM1378 91h1v1h-1zM1378 96h1v1h-1zM1378 101h1v1h-1zM1378 106h1v1h-1zM1378 111h1v1h-1zM1378 116h1v1h-1zM1378 121h1v1h-1zM1378 126h1v1h-1zM1378 131h1v1h-1zM1401 41h1v1h-1zM1401 46h1v1h-1zM1401 51h1v1h-1zM1401 56h1v1h-1zM1401 61h1v1h-1zM1401 66h1v1h-1zM1401 71h1v1h-1zM1401 76h1v1h-1zM1401 81h1v1h-1zM1401 86h1v1h-1zM1401 91h1v1h-1zM1401 96h1v1h-1zM1401 101h1v1h-1zM1401 106h1v1h-1zM1401 111h1v1h-1zM1401 116h1v1h-1zM1401 121h1v1h-1zM1401 126h1v1h-1zM1401 131h1v1h-1zM1424 41h1v1h-1zM1424 46h1v1h-1zM1424 51h1v1h-1zM1424 56h1v1h-1zM1424 61h1v1h-1zM1424 66h1v1h-1zM1424 71h1v1h-1zM1424 76h1v1h-1zM1424 81h1v1h-1zM1424 86h1v1h-1zM1424 91h1v1h-1zM1424 96h1v1h-1zM1424 101h1v1h-1zM1424 106h1v1h-1zM1424 111h1v1h-1zM1424 116h1v1h-1zM1424 121h1v1h-1zM1424 126h1v1h-1zM1424 131h1v1h-1zM1447 41h1v1h-1zM1447 46h1v1h-1zM1447 51h1v1h-1zM1447 56h1v1h-1zM1447 61h1v1h-1zM1447 66h1v1h-1zM1447 71h1v1h-1zM1447 76h1v1h-1zM1447 81h1v1h-1zM1447 86h1v1h-1zM1447 91h1v1h-1zM1447 96h1v1h-1zM1447 101h1v1h-1zM1447 106h1v1h-1zM1447 111h1v1h-1zM1447 116h1v1h-1zM1447 121h1v1h-1zM1447 126h1v1h-1zM1447 131h1v1h-1zM1470 41h1v1h-1zM1470 46h1v1h-1zM1470 51h1v1h-1zM1470 56h1v1h-1zM1470 61h1v1h-1zM1470 66h1v1h-1zM1470 71h1v1h-1zM1470 76h1v1h-1zM1470 81h1v1h-1zM1470 86h1v1h-1zM1470 91h1v1h-1zM1470 96h1v1h-1zM1470 101h1v1h-1zM1470 106h1v1h-1zM1470 111h1v1h-1zM1470 116h1v1h-1zM1470 121h1v1h-1zM1470 126h1v1h-1zM1470 131h1v1h-1zM1493 41h1v1h-1zM1493 46h1v1h-1zM1493 51h1v1h-1zM1493 56h1v1h-1zM1493 61h1v1h-1zM1493 66h1v1h-1zM1493 71h1v1h-1zM1493 76h1v1h-1zM1493 81h1v1h-1zM1493 86h1v1h-1zM1493 91h1v1h-1zM1493 96h1v1h-1zM1493 101h1v1h-1zM1493 106h1v1h-1zM1493 111h1v1h-1zM1493 116h1v1h-1zM1493 121h1v1h-1zM1493 126h1v1h-1zM1493 131h1v1h-1zM1288 35h1v1h-1zM1293 35h1v1h-1zM1298 35h1v1h-1zM1303 35h1v1h-1zM1308 35h1v1h-1zM1313 35h1v1h-1zM1318 35h1v1h-1zM1323 35h1v1h-1zM1328 35h1v1h-1zM1333 35h1v1h-1zM1338 35h1v1h-1zM1343 35h1v1h-1zM1348 35h1v1h-1zM1353 35h1v1h-1zM1358 35h1v1h-1zM1363 35h1v1h-1zM1368 35h1v1h-1zM1373 35h1v1h-1zM1378 35h1v1h-1zM1383 35h1v1h-1zM1388 35h1v1h-1zM1393 35h1v1h-1zM1398 35h1v1h-1zM1403 35h1v1h-1zM1408 35h1v1h-1zM1413 35h1v1h-1zM1418 35h1v1h-1zM1423 35h1v1h-1zM1428 35h1v1h-1zM1433 35h1v1h-1zM1438 35h1v1h-1zM1443 35h1v1h-1zM1448 35h1v1h-1zM1453 35h1v1h-1zM1458 35h1v1h-1zM1463 35h1v1h-1zM1468 35h1v1h-1zM1473 35h1v1h-1zM1478 35h1v1h-1zM1483 35h1v1h-1zM1488 35h1v1h-1zM1493 35h1v1h-1zM1498 35h1v1h-1zM1503 35h1v1h-1zM1508 35h1v1h-1zM1513 35h1v1h-1zM1288 36h1v1h-1zM1288 42h1v1h-1zM1288 48h1v1h-1zM1288 54h1v1h-1zM1288 60h1v1h-1zM1288 66h1v1h-1zM1288 72h1v1h-1zM1288 78h1v1h-1zM1288 84h1v1h-1zM1288 90h1v1h-1zM1288 96h1v1h-1zM1288 102h1v1h-1zM1288 108h1v1h-1zM1288 114h1v1h-1zM1288 120h1v1h-1zM1288 126h1v1h-1zM1288 132h1v1h-1z" fill="#b8d8d8"/><rect x="1287" y="84" width="229" height="1" fill="#3a0808"/><rect x="1287" y="85" width="229" height="1" fill="#b83030"/></svg><div class="t" style="left:1295px;top:141px;font-size:16px;color:#111;">Measurement</div><div class="t" style="left:1435px;top:140px;font-size:17px;font-weight:bold;color:#111;">Done</div><div class="t" style="left:1296px;top:172px;font-size:16px;color:#111;letter-spacing:-0.2px;">Remaining Time</div><div class="t" style="left:1436px;top:171px;font-size:17px;font-weight:bold;color:#111;">00:00:00</div><div class="a" style="left:1287px;top:267px;width:230px;height:36px;background:linear-gradient(#f2f2f2,#c9c9c9);border:1px solid #222;border-radius:4px"></div><div class="t" style="left:1287.0px;top:278.7px;font-size:13px;color:#111;width:230px;text-align:center;">New File</div><div class="a" style="left:1287px;top:318px;width:230px;height:36px;background:linear-gradient(#f2f2f2,#c9c9c9);border:1px solid #222;border-radius:4px"></div><div class="t" style="left:1287.0px;top:329.7px;font-size:13px;color:#111;width:230px;text-align:center;">New Test</div><div class="a" style="left:1287px;top:362px;width:230px;height:36px;background:linear-gradient(#f2f2f2,#c9c9c9);border:1px solid #222;border-radius:4px"></div><div class="t" style="left:1287.0px;top:373.7px;font-size:13px;color:#111;width:230px;text-align:center;">Edit Nameplate</div><div class="a" style="left:1287px;top:406px;width:230px;height:36px;background:linear-gradient(#f2f2f2,#c9c9c9);border:1px solid #222;border-radius:4px"></div><div class="t" style="left:1287.0px;top:417.7px;font-size:13px;color:#111;width:230px;text-align:center;">Analysis</div><div class="a" style="left:1287px;top:450px;width:114px;height:36px;background:linear-gradient(#f2f2f2,#c9c9c9);border:1px solid #222;border-radius:4px"></div><div class="t" style="left:1287.0px;top:461.7px;font-size:13px;color:#111;width:114px;text-align:center;">Export</div><div class="a" style="left:1403px;top:450px;width:114px;height:36px;background:linear-gradient(#f2f2f2,#c9c9c9);border:1px solid #222;border-radius:4px"></div><div class="t" style="left:1403.0px;top:461.7px;font-size:13px;color:#111;width:114px;text-align:center;">Report</div><div class="a" style="left:1287px;top:501px;width:230px;height:36px;background:linear-gradient(#f2f2f2,#c9c9c9);border:1px solid #222;border-radius:4px"></div><div class="t" style="left:1287.0px;top:512.7px;font-size:13px;color:#111;width:230px;text-align:center;">Disconnect</div><div class="a" style="left:1287px;top:542px;width:231px;height:232px;border:1px solid #222;border-radius:4px;background:#f0f0f0"></div><div class="t" style="left:1295px;top:550px;font-size:20px;font-weight:bold;color:#111;">Settings</div><div class="a" style="left:1476px;top:548px;width:36px;height:23px;background:#0000cc;border-radius:4px"></div><svg class="a" style="left:1487px;top:559.5px" width="15" height="5"><rect x="0" y="0" width="4" height="4" fill="#fff"/><rect x="5.5" y="0" width="4" height="4" fill="#fff"/><rect x="11" y="0" width="4" height="4" fill="#fff"/></svg><div class="t" style="left:1294px;top:584.5px;font-size:16px;color:#111;">Stop time</div><div class="t" style="left:1294px;top:618px;font-size:16px;color:#111;">Test mode</div><div class="t" style="left:1294px;top:651px;font-size:16px;color:#111;">Voltage (Vdc)</div><div class="t" style="left:1294px;top:683px;font-size:16px;color:#111;">Temperature (°C)</div><div class="t" style="left:1294px;top:716.5px;font-size:16px;color:#111;">Stop frequency</div><div class="t" style="left:1294px;top:748.5px;font-size:16px;color:#111;">Analysis</div><div class="a" style="left:1431px;top:578px;width:82px;height:28px;background:#cccccc"></div><div class="t" style="left:1435px;top:584px;font-size:16px;color:#707070;">2000s</div><div class="a" style="left:1432px;top:613px;width:80px;height:26px;background:linear-gradient(#f0f0f0,#c0c0c0);border:1px solid #222;border-radius:4px"></div><div class="t" style="left:1456px;top:618px;font-size:16px;color:#8a8a8a;">CHL ...</div><div class="a" style="left:1432px;top:646px;width:80px;height:26px;background:#f0f0f0;border:1px solid #d8d8d8"></div><div class="t" style="left:1432.0px;top:651px;font-size:16px;color:#777;width:80px;text-align:center;">200</div><div class="a" style="left:1432px;top:678px;width:80px;height:26px;background:#ffffff;border:1px solid #888"></div><div class="t" style="left:1432.0px;top:683px;font-size:16px;color:#111;width:80px;text-align:center;">22</div><div class="a" style="left:1431px;top:711px;width:82px;height:27px;background:#cccccc"></div><div class="t" style="left:1435px;top:716px;font-size:16px;color:#8a8a8a;">0,1 Hz</div><div class="a" style="left:1430px;top:744px;width:84px;height:27px;background:#e6e6e6;border:1px solid #adadad"></div><div class="t" style="left:1434px;top:750px;font-size:16px;color:#111;">Moisture</div><svg class="a" style="left:0;top:0" width="1522" height="820"><circle cx="1504" cy="593" r="5.5" fill="none" stroke="#c4c4c4" stroke-width="1"/><circle cx="1504" cy="725" r="5.5" fill="none" stroke="#c4c4c4" stroke-width="1"/></svg><svg class="a" style="left:1499px;top:589px" width="10" height="7"><path d="M1 1.5L4.5 5L8 1.5" stroke="#aaaaaa" stroke-width="1" fill="none"/></svg><svg class="a" style="left:1499px;top:721px" width="10" height="7"><path d="M1 1.5L4.5 5L8 1.5" stroke="#aaaaaa" stroke-width="1" fill="none"/></svg><svg class="a" style="left:1501px;top:754px" width="10" height="7"><path d="M1 1.5L4.5 5L8 1.5" stroke="#333" stroke-width="1" fill="none"/></svg><div class="a" style="left:1287px;top:779px;width:230px;height:36px;background:linear-gradient(#ff8c1e,#e06000);border:1px solid #c05000;border-radius:4px"></div><div class="t" style="left:1286.5px;top:791px;font-size:13px;font-weight:bold;color:#fff2cc;width:230px;text-align:center;">Remake</div></body></html>
